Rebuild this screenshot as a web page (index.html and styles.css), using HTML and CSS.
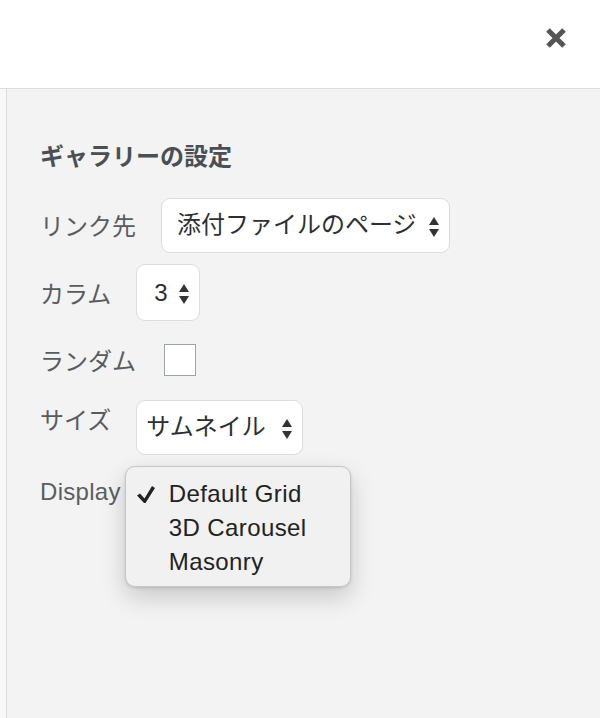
FILE: index.html
```html
<!DOCTYPE html>
<html lang="ja">
<head>
<meta charset="utf-8">
<title>ギャラリーの設定</title>
<link rel="stylesheet" href="styles.css">
</head>
<body>
<header class="topbar">
  <button class="close" aria-label="閉じる">
    <svg width="22" height="22" viewBox="0 0 22 22"><path d="M3 3 L19 19 M19 3 L3 19" stroke="#555" stroke-width="5" stroke-linecap="butt"/></svg>
  </button>
</header>
<main class="main">
  <section class="settings">
    <h2 class="settings-title">ギャラリーの設定</h2>
    <div class="rows">
      <div class="row">
        <span class="label">リンク先</span>
        <span class="select"><span class="select-text">添付ファイルのページ</span>
          <svg class="arrows" width="10" height="20" viewBox="0 0 10 20"><path d="M0 8 L5 0 L10 8 Z M0 12 L10 12 L5 20 Z" fill="#333"/></svg></span>
      </div>
      <div class="row">
        <span class="label">カラム</span>
        <span class="select select-num"><span class="select-text">3</span>
          <svg class="arrows" width="10" height="20" viewBox="0 0 10 20"><path d="M0 8 L5 0 L10 8 Z M0 12 L10 12 L5 20 Z" fill="#333"/></svg></span>
      </div>
      <div class="row">
        <span class="label">ランダム</span>
        <span class="checkbox"></span>
      </div>
      <div class="row">
        <span class="label label-raised">サイズ</span>
        <span class="select select-tight"><span class="select-text">サムネイル</span>
          <svg class="arrows" width="10" height="20" viewBox="0 0 10 20"><path d="M0 8 L5 0 L10 8 Z M0 12 L10 12 L5 20 Z" fill="#333"/></svg></span>
      </div>
      <div class="row row-top">
        <span class="label label-latin">Display</span>
        <ul class="menu">
          <li class="menu-item"><span class="check"><svg width="18" height="17" viewBox="0 0 18 17"><path d="M0 9.5 L3 7.5 L7.5 12.5 L15 0 L18 2 L8.5 17 L7 17 Z" fill="#222"/></svg></span>Default Grid</li>
          <li class="menu-item"><span class="check"></span>3D Carousel</li>
          <li class="menu-item"><span class="check"></span>Masonry</li>
        </ul>
      </div>
    </div>
  </section>
</main>
</body>
</html>
```
FILE: styles.css
```css
html, body {
  margin: 0;
  padding: 0;
}
body {
  background: #f8f8f8;
  font-family: "Liberation Sans", "Noto Sans CJK JP", sans-serif;
  width: 600px;
  height: 718px;
  overflow: hidden;
}
.topbar {
  background: #fff;
  border-bottom: 1px solid #dcdcdc;
  display: flex;
  justify-content: flex-end;
  align-items: flex-start;
  padding: 27px 33px 0 0;
  box-sizing: content-box;
  height: 61px;
}
.close {
  border: 0;
  background: none;
  padding: 0;
  width: 22px;
  height: 22px;
  display: block;
}
.close svg { display: block; }
.main {
  margin-left: 6px;
  border-left: 1px solid #dddddd;
  background: #f3f3f3;
  height: 629px;
}
.settings {
  padding: 54px 0 0 33px;
}
.settings-title {
  margin: 0 0 30px;
  font-family: "Noto Sans CJK JP", sans-serif;
  font-size: 24px;
  line-height: 24px;
  font-weight: 700;
  color: #4a4f55;
}
.rows {
  display: flex;
  flex-direction: column;
  gap: 11px;
}
.row {
  display: flex;
  align-items: center;
  gap: 25px;
  min-height: 56px;
}
.row-top {
  align-items: flex-start;
  gap: 4px;
}
.label {
  font-family: "Noto Sans CJK JP", sans-serif;
  font-size: 24px;
  line-height: 24px;
  color: #575c61;
}
.label-raised {
  margin-bottom: 16px;
}
.label-latin {
  font-family: "Liberation Sans", sans-serif;
  letter-spacing: 0.3px;
  margin-top: 14px;
  color: #5a5e63;
}
.select {
  display: inline-flex;
  align-items: center;
  gap: 12px;
  height: 55px;
  box-sizing: border-box;
  padding: 0 10px 0 15px;
  background: #fff;
  border: 1.5px solid #dcdcdc;
  border-radius: 9px;
  color: #2c3034;
  font-size: 24px;
  line-height: 24px;
}
.select-num {
  padding-left: 17px;
  gap: 11px;
  height: 57px;
}
.select-tight {
  padding-left: 9px;
  gap: 16px;
}
.select-text {
  font-family: "Liberation Sans", "Noto Sans CJK JP", sans-serif;
}
.arrows {
  display: block;
  margin-top: 3px;
}
.checkbox {
  width: 32px;
  height: 32px;
  box-sizing: border-box;
  background: #fff;
  border: 1px solid #9ea3a8;
  margin-left: 3px;
}
.menu {
  list-style: none;
  margin: 0;
  padding: 10px 0 7px;
  width: 226px;
  box-sizing: border-box;
  background: #f1f1f1;
  border: 1px solid #c4c6c8;
  border-radius: 10px;
  box-shadow: 0 10px 24px rgba(0, 0, 0, 0.18), 0 1px 3px rgba(0, 0, 0, 0.12);
}
.menu-item {
  display: flex;
  align-items: center;
  height: 34px;
  font-family: "Liberation Sans", sans-serif;
  font-size: 24px;
  letter-spacing: 0.4px;
  color: #222;
}
.check {
  width: 43px;
  flex: none;
  display: flex;
  padding-left: 11px;
  box-sizing: border-box;
}
.check svg { display: block; }
```
